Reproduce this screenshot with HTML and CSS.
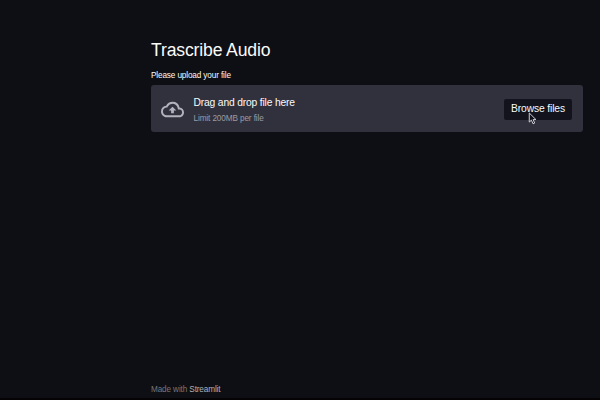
FILE: index.html
```
<!DOCTYPE html>
<html lang="en">
<head>
<meta charset="utf-8">
<title>Trascribe Audio</title>
<link rel="stylesheet" href="styles.css">
</head>
<body>
<main class="page">
  <h1 class="title">Trascribe Audio</h1>
  <div class="label">Please upload your file</div>
  <section class="dropzone">
    <svg class="cloud" viewBox="0 0 24 24" fill="currentColor"><path d="M19.35 10.04A7.49 7.49 0 0 0 12 4C9.11 4 6.6 5.64 5.35 8.04A5.994 5.994 0 0 0 0 14c0 3.31 2.69 6 6 6h13c2.76 0 5-2.24 5-5 0-2.64-2.05-4.78-4.65-4.96zM19 18H6c-2.21 0-4-1.79-4-4 0-2.05 1.53-3.76 3.56-3.97l1.07-.11.5-.95A5.469 5.469 0 0 1 12 6c2.62 0 4.88 1.86 5.39 4.43l.3 1.5 1.53.11A2.98 2.98 0 0 1 22 15c0 1.65-1.35 3-3 3zM8 13h2.55v3h2.9v-3H16l-4-4z"/></svg>
    <div class="instructions">
      <div class="main-text">Drag and drop file here</div>
      <div class="limit">Limit 200MB per file</div>
    </div>
    <button class="browse">Browse files
      <svg class="cursor" viewBox="0 0 8 12"><path d="M1 .9V9.3L3 7.5 4.5 10.9 6 10.2 4.6 7H7.2Z" fill="#11121a" stroke="#d4d4dc" stroke-width=".9" stroke-linejoin="round"/></svg>
    </button>
  </section>
  <footer class="footer">Made with <span class="brand">Streamlit</span></footer>
</main>
</body>
</html>
```
FILE: styles.css
```
* { box-sizing: border-box; }
body {
  margin: 0;
  height: 400px;
  overflow: hidden;
  background: #0e0f14;
  border-bottom: 2px solid #050304;
  color: #fafafa;
  font-family: "Liberation Sans", Arial, sans-serif;
}
.page {
  display: flex;
  flex-direction: column;
  width: 432px;
  height: 398px;
  margin-left: 151px;
  padding: 40px 0 2px;
}
.title {
  margin: 0;
  font-size: 17.6px;
  font-weight: 400;
  letter-spacing: -0.15px;
  line-height: 21px;
}
.label {
  margin-top: 10px;
  font-size: 8.2px;
  letter-spacing: -0.13px;
  line-height: 10px;
}
.dropzone {
  display: flex;
  align-items: center;
  height: 47px;
  margin-top: 4px;
  padding: 0 11px 0 10px;
  border-radius: 3px;
  background: #31313d;
}
.cloud {
  width: 23px;
  height: 23px;
  margin-top: 1px;
  color: #b3b3bd;
}
.instructions { margin: 4px 0 0 9.5px; }
.main-text {
  font-size: 10.3px;
  letter-spacing: -0.17px;
  line-height: 14px;
}
.limit {
  margin-top: 3px;
  color: #9b9ba4;
  font-size: 8.2px;
  letter-spacing: -0.11px;
  line-height: 12px;
}
.browse {
  position: relative;
  width: 68px;
  height: 21px;
  margin-left: auto;
  margin-top: 1px;
  padding: 0 0 2px;
  border: 0;
  border-radius: 2px;
  background: #12131c;
  color: #fafafa;
  font: 10.3px/19px "Liberation Sans", Arial, sans-serif;
  letter-spacing: -0.13px;
}
.cursor {
  position: absolute;
  left: 24px;
  top: 13px;
  width: 9px;
  height: 13px;
}
.footer {
  margin-top: auto;
  color: #76767b;
  font-size: 8.2px;
  letter-spacing: -0.13px;
  line-height: 12px;
}
.brand { color: #b2b2b6; }
```
